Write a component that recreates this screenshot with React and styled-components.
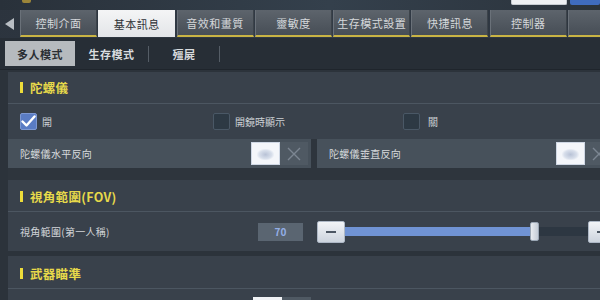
import React from "react";
import styled, { createGlobalStyle, css } from "styled-components";

const Global = createGlobalStyle`
  html, body { margin: 0; padding: 0; }
  body {
    width: 600px; height: 300px; overflow: hidden;
    background: #2b323b;
    font-family: "Noto Sans CJK TC", "Noto Sans", sans-serif;
  }
`;

const Screen = styled.div`
  width: 600px;
  height: 300px;
  overflow: hidden;
  display: flex;
  flex-direction: column;
  background: linear-gradient(120deg, #2c343e 0%, #323b46 45%, #2a313a 100%);
  & > * { flex-shrink: 0; }
`;

const TopStrip = styled.div`
  height: 10px;
  display: flex;
  align-items: flex-start;
  padding-left: 22px;
  background: linear-gradient(90deg, #29313a, #34404c 55%, #2b333c);
`;

const Emblem = styled.div`
  width: 9px;
  height: 3px;
  background: #b89a3a;
  border-radius: 0 0 2px 2px;
  opacity: 0.8;
`;

const Spacer = styled.div`flex: 1;`;

const TopButton = styled.div`
  height: 5px;
  border-radius: 0 0 2px 2px;
  ${(p) =>
    p.$blue
      ? css`width: 30px; margin-left: 3px; background: #3f6cc0;`
      : css`width: 56px; background: #eef0f3; border: 1px solid #c7ccd2; border-top: 0; box-sizing: border-box;`}
`;

const TabBar = styled.div`
  height: 27px;
  display: flex;
  align-items: stretch;
  padding-left: 4px;
  & > * { flex-shrink: 0; }
`;

const Arrow = styled.div`
  width: 16px;
  display: flex;
  align-items: center;
  justify-content: flex-start;
  &::before {
    content: "";
    width: 0; height: 0;
    border-top: 6px solid transparent;
    border-bottom: 6px solid transparent;
    border-right: 9px solid #b9bec4;
    margin-left: 1px;
  }
`;

const Tab = styled.div`
  flex: 0 0 77px;
  box-sizing: border-box;
  display: flex;
  align-items: center;
  justify-content: center;
  font-size: 11px;
  letter-spacing: 0.5px;
  margin-right: 1.3px;
  ${(p) =>
    p.$active
      ? css`
          background: linear-gradient(#f4f5f6, #e3e5e8);
          color: #2d3136;
        `
      : css`
          background: linear-gradient(#5d646c, #474e56);
          color: #d5d8db;
          border-bottom: 2px solid #c9b444;
          border-left: 1px solid #6a7179;
          border-right: 1px solid #3c434a;
        `}
`;

const SubBar = styled.div`
  height: 32px;
  margin-top: 1px;
  display: flex;
  align-items: center;
  padding-left: 5px;
  background: #272e36;
  border-bottom: 1px solid #1f252c;
  box-sizing: border-box;
  & > * { flex-shrink: 0; }
`;

const SubTab = styled.div`
  height: 25px;
  display: flex;
  align-items: center;
  justify-content: center;
  font-size: 11px;
  font-weight: 700;
  letter-spacing: 0.5px;
  width: ${(p) => p.$w}px;
  ${(p) =>
    p.$active
      ? css`background: #b6babe; color: #2a2e33;`
      : css`color: #d9dcdf;`}
`;

const SubSep = styled.div`
  width: 1px;
  height: 16px;
  background: #555d66;
`;

const Content = styled.div`
  padding: 2px 0 0 8px;
  display: flex;
  flex-direction: column;
  background: #2c333b;
  height: 300px;
  & > * { flex-shrink: 0; }
`;

const Section = styled.div`
  background: #39414b;
  display: flex;
  flex-direction: column;
  margin-bottom: ${(p) => p.$mb || 0}px;
  & > * { flex-shrink: 0; }
`;

const SectionHeader = styled.div`
  height: ${(p) => p.$h || 32}px;
  box-sizing: border-box;
  display: flex;
  align-items: center;
  padding-left: 12px;
  padding-top: ${(p) => p.$pt || 0}px;
  gap: 7px;
  border-bottom: 1px solid #4c5661;
  color: #e7d94a;
  font-size: 12.5px;
  font-weight: 700;
  letter-spacing: 0.3px;
`;

const Mark = styled.span`
  width: 3px;
  height: 11px;
  background: #ecdc3a;
`;

const CheckRow = styled.div`
  height: 35px;
  display: flex;
  align-items: center;
  padding-left: 12px;
`;

const CheckItem = styled.label`
  display: flex;
  align-items: center;
  gap: 5px;
  width: ${(p) => p.$w}px;
  color: #cdd1d5;
  font-size: 10px;
`;

const Box = styled.span`
  width: 17px;
  height: 17px;
  box-sizing: border-box;
  border-radius: 2px;
  display: flex;
  align-items: center;
  justify-content: center;
  ${(p) =>
    p.$checked
      ? css`background: #5a7cc4; border: 1px solid #7d98d2;`
      : css`background: #2d3944; border: 1px solid #4a5866;`}
`;

const PairRow = styled.div`
  display: flex;
  gap: 6px;
  background: #2e353d;
  padding-bottom: 12px;
  & > * { flex-shrink: 0; }
`;

const Cell = styled.div`
  height: 29px;
  flex: 0 0 ${(p) => p.$w}px;
  display: flex;
  align-items: center;
  padding-left: ${(p) => p.$pl}px;
  box-sizing: border-box;
  background: #47515b;
  color: #d8dbde;
  font-size: 10px;
`;

const Label = styled.span`
  flex: 1;
  letter-spacing: 0.3px;
`;

const Toggle = styled.div`
  display: flex;
  align-items: center;
  height: 23px;
  background: #4f5963;
  margin-right: ${(p) => p.$mr || 0}px;
`;

const Knob = styled.div`
  width: 29px;
  height: 23px;
  box-sizing: border-box;
  border: 1px solid #cfd7e4;
  background: radial-gradient(ellipse 9px 6px at 50% 55%, #b8c2d6 0%, #d8dfeb 70%, #f4f6fa 100%);
`;

const XArea = styled.div`
  width: 28px;
  display: flex;
  align-items: center;
  justify-content: center;
`;

const FovRow = styled.div`
  height: 39px;
  display: flex;
  align-items: center;
  padding-left: 12px;
  color: #d2d5d9;
  font-size: 10px;
`;

const FovLabel = styled.span`
  width: 238px;
  letter-spacing: 0.3px;
`;

const ValueBox = styled.div`
  width: 45px;
  height: 18px;
  background: #5a6571;
  color: #93aee6;
  font-size: 10px;
  font-weight: 700;
  display: flex;
  align-items: center;
  justify-content: center;
  margin-right: 14px;
`;

const Slider = styled.div`
  flex: 1;
  display: flex;
  align-items: center;
`;

const StepButton = styled.div`
  width: 28px;
  height: 22px;
  flex: 0 0 28px;
  box-sizing: border-box;
  border-radius: 2px;
  border: 1px solid #aeb8c6;
  background: linear-gradient(#f2f4f7, #cdd4de);
  display: flex;
  align-items: center;
  justify-content: center;
  margin-right: ${(p) => p.$mr || 0}px;
  &::before {
    content: "";
    width: 10px;
    height: 2px;
    background: #4c5663;
  }
`;

const Track = styled.div`
  flex: 1;
  height: 9px;
  background: #2d3742;
  display: flex;
  align-items: center;
`;

const Fill = styled.div`
  height: 9px;
  background: #7093d4;
`;

const Thumb = styled.div`
  width: 9px;
  height: 19px;
  flex: 0 0 9px;
  box-sizing: border-box;
  border: 1px solid #9aa6b4;
  border-radius: 2px;
  background: linear-gradient(90deg, #e8ecf0, #c4ccd6);
`;

const BottomToggle = styled.div`
  margin: 8px 0 0 245px;
  width: 29px;
  height: 10px;
  background: #f0f2f5;
  box-shadow: 29px 0 0 #4f5963;
`;

const Check = () => (
  <svg width="15" height="13" viewBox="0 0 15 13">
    <polyline points="1.5,6.5 5.5,10.5 13.5,1.5" fill="none" stroke="#ffffff" strokeWidth="2.4" strokeLinecap="round" strokeLinejoin="round" />
  </svg>
);

const XIcon = () => (
  <svg width="14" height="14" viewBox="0 0 14 14">
    <path d="M1 1L13 13M13 1L1 13" stroke="#7c8692" strokeWidth="1.4" />
  </svg>
);

const tabs = ["控制介面", "基本訊息", "音效和畫質", "靈敏度", "生存模式設置", "快捷訊息", "控制器", "配"];

export default function App() {
  return (
    <>
      <Global />
      <Screen>
        <TopStrip>
          <Emblem />
          <Spacer />
          <TopButton />
          <TopButton $blue />
        </TopStrip>
        <TabBar>
          <Arrow />
          {tabs.map((t, i) => (
            <Tab key={t} $active={i === 1}>{t}</Tab>
          ))}
        </TabBar>
        <SubBar>
          <SubTab $active $w={70}>多人模式</SubTab>
          <SubTab $w={73}>生存模式</SubTab>
          <SubSep />
          <SubTab $w={70}>殭屍</SubTab>
          <SubSep />
        </SubBar>
        <Content>
          <Section>
            <SectionHeader>
              <Mark />
              陀螺儀
            </SectionHeader>
            <CheckRow>
              <CheckItem $w={193}>
                <Box $checked><Check /></Box>
                開
              </CheckItem>
              <CheckItem $w={190}>
                <Box />
                開鏡時顯示
              </CheckItem>
              <CheckItem $w={60}>
                <Box />
                <span style={{ marginLeft: 3 }}>關</span>
              </CheckItem>
            </CheckRow>
            <PairRow>
              <Cell $w={303} $pl={12}>
                <Label>陀螺儀水平反向</Label>
                <Toggle $mr={3}>
                  <Knob />
                  <XArea><XIcon /></XArea>
                </Toggle>
              </Cell>
              <Cell $w={300} $pl={12}>
                <Label>陀螺儀垂直反向</Label>
                <Toggle $mr={4}>
                  <Knob />
                  <XArea><XIcon /></XArea>
                </Toggle>
              </Cell>
            </PairRow>
          </Section>
          <Section $mb={5}>
            <SectionHeader $h={32} $pt={2}>
              <Mark />
              視角範圍(FOV)
            </SectionHeader>
            <FovRow>
              <FovLabel>視角範圍(第一人稱)</FovLabel>
              <ValueBox>70</ValueBox>
              <Slider>
                <StepButton />
                <Track>
                  <Fill style={{ width: `${(185 / 243) * 100}%` }} />
                  <Thumb />
                </Track>
                <StepButton $mr={-16} />
              </Slider>
            </FovRow>
          </Section>
          <Section>
            <SectionHeader $h={33} $pt={2}>
              <Mark />
              武器瞄準
            </SectionHeader>
            <BottomToggle />
          </Section>
        </Content>
      </Screen>
    </>
  );
}
